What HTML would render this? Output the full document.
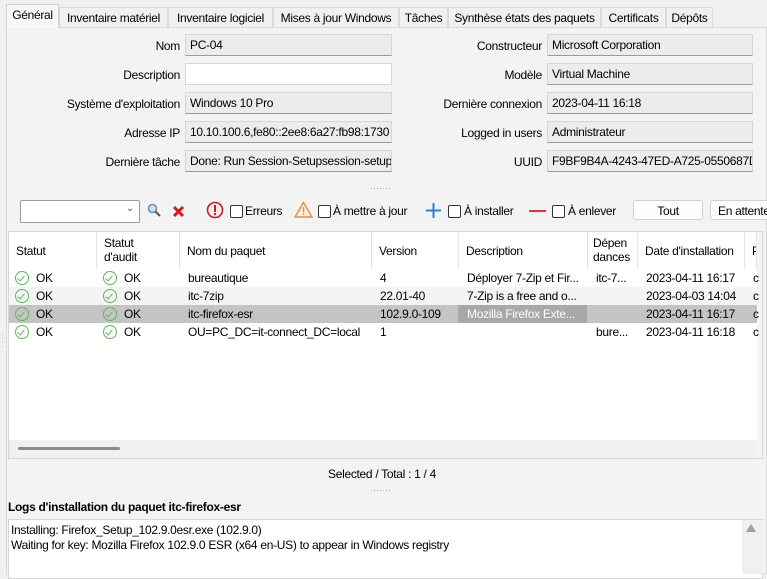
<!DOCTYPE html>
<html><head><meta charset="utf-8"><style>
*{box-sizing:border-box;margin:0;padding:0}
body{width:767px;height:574px;overflow:hidden;background:#f0f0f0;font-family:"Liberation Sans",sans-serif;font-size:12px;color:#000;position:relative;letter-spacing:-0.3px}
.a{position:absolute;white-space:nowrap}
.tab{position:absolute;top:7px;height:20px;border:1px solid #d9d9d9;border-bottom:none;background:#f0f0f0;padding:3px 0 0 0;text-align:center}
.lbl{position:absolute;text-align:right;width:175px;left:5px}
.rlbl{position:absolute;text-align:right;width:200px;left:342px}
.box{position:absolute;height:22px;background:#ececec;border:1px solid #d6d6d6;border-bottom:1px solid #9a9a9a;padding:3px 0 0 4px;overflow:hidden;white-space:nowrap}
.cb{position:absolute;width:13px;height:13px;border:1px solid #333;background:#fff;border-radius:2px}
.th{position:absolute;top:232px;height:37px;border-right:1px solid #e5e5e5;padding-left:7px}
.row{position:absolute;left:9px;width:748px;height:18px}
.c{position:absolute;top:2px;white-space:nowrap;overflow:hidden}
.ok{position:absolute;top:2px;width:14px;height:14px;border:1px solid #5cb85c;border-radius:50%}
.ok:after{content:"";position:absolute;left:3px;top:2px;width:3px;height:6px;border:solid #5cb85c;border-width:0 1.3px 1.3px 0;transform:rotate(40deg)}
</style></head><body>
<!-- tabs -->
<div class="a" style="left:6px;top:27px;width:761px;height:547px;border:1px solid #d9d9d9;background:#f3f3f3"></div>
<div class="tab" style="left:6px;top:4px;height:24px;width:53px;background:#f9f9f9;border-color:#d0d0d0">Général</div>
<div class="tab" style="left:59px;width:109px">Inventaire matériel</div>
<div class="tab" style="left:168px;width:105px">Inventaire logiciel</div>
<div class="tab" style="left:273px;width:126px">Mises à jour Windows</div>
<div class="tab" style="left:399px;width:49px">Tâches</div>
<div class="tab" style="left:448px;width:153px">Synthèse états des paquets</div>
<div class="tab" style="left:601px;width:65px">Certificats</div>
<div class="tab" style="left:666px;width:47px">Dépôts</div>

<!-- fields -->
<div class="lbl" style="top:39px">Nom</div>
<div class="lbl" style="top:68px">Description</div>
<div class="lbl" style="top:97px">Système d'exploitation</div>
<div class="lbl" style="top:126px">Adresse IP</div>
<div class="lbl" style="top:155px">Dernière tâche</div>
<div class="box" style="left:185px;top:34px;width:207px">PC-04</div>
<div class="box" style="left:185px;top:63px;width:207px;background:#fff;border-bottom-color:#d6d6d6"></div>
<div class="box" style="left:185px;top:92px;width:207px">Windows 10 Pro</div>
<div class="box" style="left:185px;top:121px;width:207px">10.10.100.6,fe80::2ee8:6a27:fb98:1730</div>
<div class="box" style="left:185px;top:150px;width:207px">Done: Run Session-Setupsession-setup</div>
<div class="rlbl" style="top:39px">Constructeur</div>
<div class="rlbl" style="top:68px">Modèle</div>
<div class="rlbl" style="top:97px">Dernière connexion</div>
<div class="rlbl" style="top:126px">Logged in users</div>
<div class="rlbl" style="top:155px">UUID</div>
<div class="box" style="left:547px;top:34px;width:206px">Microsoft Corporation</div>
<div class="box" style="left:547px;top:63px;width:206px">Virtual Machine</div>
<div class="box" style="left:547px;top:92px;width:206px">2023-04-11 16:18</div>
<div class="box" style="left:547px;top:121px;width:206px">Administrateur</div>
<div class="box" style="left:547px;top:150px;width:206px">F9BF9B4A-4243-47ED-A725-0550687D8</div>
<div class="a" style="left:370px;top:183px;color:#999;font-size:9px;letter-spacing:0">·······</div>

<!-- toolbar -->
<div class="a" style="left:20px;top:200px;width:120px;height:23px;background:#fff;border:1px solid #999;border-radius:2px"></div>
<div class="a" style="left:126px;top:203px;color:#555;font-size:10px">⌄</div>
<svg class="a" style="left:147px;top:203px" width="14" height="14"><circle cx="5.5" cy="5.5" r="4" fill="#cfe0f0" stroke="#6a8fb0" stroke-width="1.5"/><line x1="8.5" y1="8.5" x2="13" y2="13" stroke="#555" stroke-width="2"/></svg>
<svg class="a" style="left:172px;top:205px" width="13" height="13"><path d="M2 2L11 11M11 2L2 11" stroke="#d9141c" stroke-width="3"/></svg>
<svg class="a" style="left:206px;top:201px" width="18" height="18"><circle cx="9" cy="9" r="7.5" fill="none" stroke="#d9141c" stroke-width="1.6"/><rect x="8" y="4" width="2" height="7" fill="#d9141c"/><rect x="8" y="12" width="2" height="2" fill="#d9141c"/></svg>
<div class="cb" style="left:230px;top:205px"></div><div class="a" style="left:245px;top:204px">Erreurs</div>
<svg class="a" style="left:294px;top:201px" width="19" height="17"><path d="M9.5 1.5L18 16H1Z" fill="none" stroke="#f08c2c" stroke-width="1.4"/><rect x="8.8" y="6" width="1.5" height="5.5" fill="#f08c2c"/><rect x="8.8" y="12.5" width="1.5" height="1.5" fill="#f08c2c"/></svg>
<div class="cb" style="left:318px;top:205px"></div><div class="a" style="left:333px;top:204px">À mettre à jour</div>
<svg class="a" style="left:425px;top:202px" width="17" height="17"><path d="M8.5 1V16M1 8.5H16" stroke="#2b7fd4" stroke-width="2"/></svg>
<div class="cb" style="left:448px;top:205px"></div><div class="a" style="left:464px;top:204px">À installer</div>
<div class="a" style="left:529px;top:210px;width:17px;height:2px;background:#e0353b"></div>
<div class="cb" style="left:552px;top:205px"></div><div class="a" style="left:568px;top:204px">À enlever</div>
<div class="a" style="left:633px;top:200px;width:70px;height:20px;background:#fdfdfd;border:1px solid #d0d0d0;border-radius:3px;text-align:center;padding-top:3px">Tout</div>
<div class="a" style="left:710px;top:200px;width:60px;height:20px;background:#fdfdfd;border:1px solid #d0d0d0;border-radius:3px;padding:3px 0 0 7px">En attente</div>

<!-- table -->
<div class="a" style="left:8px;top:231px;width:755px;height:228px;background:#fff;border:1px solid #d6d6d6"></div>
<div class="a" style="left:757px;top:232px;width:5px;height:226px;background:#f5f5f5"></div>
<div class="th" style="left:9px;width:88px;padding-top:12px">Statut</div>
<div class="th" style="left:97px;width:83px;padding-top:4px;line-height:14px">Statut<br>d'audit</div>
<div class="th" style="left:180px;width:192px;padding-top:12px">Nom du paquet</div>
<div class="th" style="left:372px;width:87px;padding-top:12px">Version</div>
<div class="th" style="left:459px;width:129px;padding-top:12px">Description</div>
<div class="th" style="left:588px;width:50px;padding:4px 0 0 5px;line-height:14px">Dépen<br>dances</div>
<div class="th" style="left:638px;width:107px;padding-top:12px">Date d'installation</div>
<div class="th" style="left:745px;width:12px;padding-top:12px;overflow:hidden">P</div>

<div class="row" style="top:269px">
<div class="ok" style="left:6px"></div><div class="c" style="left:27px">OK</div>
<div class="ok" style="left:94px"></div><div class="c" style="left:115px">OK</div>
<div class="c" style="left:179px">bureautique</div><div class="c" style="left:371px">4</div>
<div class="c" style="left:458px;width:125px">Déployer 7-Zip et Fir...</div><div class="c" style="left:587px">itc-7...</div>
<div class="c" style="left:637px">2023-04-11 16:17</div><div class="c" style="left:744px">c</div></div>
<div class="row" style="top:287px;background:#f4f4f4">
<div class="ok" style="left:6px"></div><div class="c" style="left:27px">OK</div>
<div class="ok" style="left:94px"></div><div class="c" style="left:115px">OK</div>
<div class="c" style="left:179px">itc-7zip</div><div class="c" style="left:371px">22.01-40</div>
<div class="c" style="left:458px;width:125px">7-Zip is a free and o...</div>
<div class="c" style="left:637px">2023-04-03 14:04</div><div class="c" style="left:744px">c</div></div>
<div class="row" style="top:305px;background:#c4c4c4">
<div class="a" style="left:449px;top:0;width:129px;height:18px;background:#a8a8a8"></div>
<div class="ok" style="left:6px"></div><div class="c" style="left:27px">OK</div>
<div class="ok" style="left:94px"></div><div class="c" style="left:115px">OK</div>
<div class="c" style="left:179px">itc-firefox-esr</div><div class="c" style="left:371px">102.9.0-109</div>
<div class="c" style="left:458px;width:125px;color:#fff">Mozilla Firefox Exte...</div>
<div class="c" style="left:637px">2023-04-11 16:17</div><div class="c" style="left:744px">c</div></div>
<div class="row" style="top:323px">
<div class="ok" style="left:6px"></div><div class="c" style="left:27px">OK</div>
<div class="ok" style="left:94px"></div><div class="c" style="left:115px">OK</div>
<div class="c" style="left:179px">OU=PC_DC=it-connect_DC=local</div><div class="c" style="left:371px">1</div>
<div class="c" style="left:587px">bure...</div>
<div class="c" style="left:637px">2023-04-11 16:18</div><div class="c" style="left:744px">c</div></div>
<div class="a" style="left:9px;top:440px;width:748px;height:18px;background:#f0f0f0"></div>
<div class="a" style="left:18px;top:447px;width:102px;height:3px;background:#8a8a8a;border-radius:2px"></div>
<div class="a" style="left:1px;top:333px;color:#aaa;font-size:8px;line-height:4px;letter-spacing:0">·<br>·<br>·<br>·</div>

<div class="a" style="left:328px;top:467px">Selected / Total : 1 / 4</div>
<div class="a" style="left:370px;top:485px;color:#999;font-size:9px;letter-spacing:0">·······</div>
<div class="a" style="left:8px;top:500px;font-weight:bold">Logs d'installation du paquet itc-firefox-esr</div>

<div class="a" style="left:8px;top:519px;width:755px;height:60px;background:#fff;border:1px solid #d6d6d6"></div>
<div class="a" style="left:742px;top:520px;width:21px;height:54px;background:#f0f0f0"></div>
<div class="a" style="left:746px;top:524px;width:0;height:0;border-left:5px solid transparent;border-right:5px solid transparent;border-bottom:8px solid #a0a0a0"></div>
<div class="a" style="left:11px;top:523px;line-height:15px">Installing: Firefox_Setup_102.9.0esr.exe (102.9.0)<br>Waiting for key: Mozilla Firefox 102.9.0 ESR (x64 en-US) to appear in Windows registry</div>
</body></html>
